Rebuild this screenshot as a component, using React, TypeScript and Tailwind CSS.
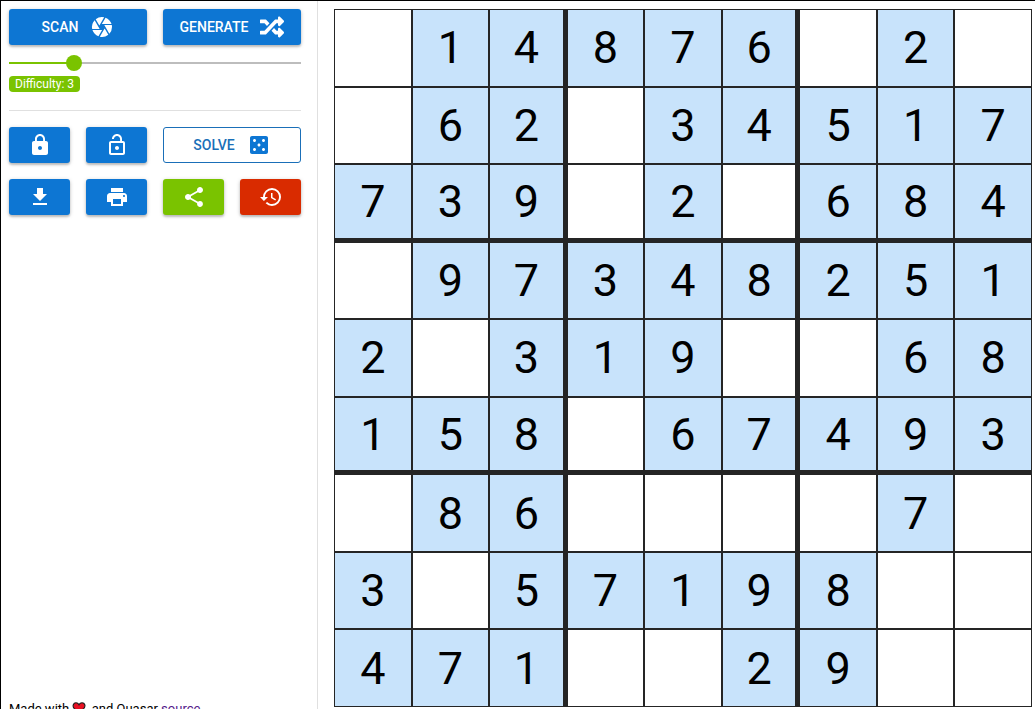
import { useState } from "react";
import type { ButtonHTMLAttributes } from "react";
import { FaRandom } from "react-icons/fa";
import {
  MdCamera,
  MdCasino,
  MdGetApp,
  MdHistory,
  MdLock,
  MdLockOpen,
  MdPrint,
  MdShare,
} from "react-icons/md";
import { twMerge } from "tailwind-merge";

const PUZZLE = [
  "014876020",
  "062034517",
  "739020684",
  "097348251",
  "203190068",
  "158067493",
  "086000070",
  "305719800",
  "471002900",
];

const MIN_DIFFICULTY = 1;
const MAX_DIFFICULTY = 10;

function ActionButton({ className, ...rest }: ButtonHTMLAttributes<HTMLButtonElement>) {
  return (
    <button
      type="button"
      className={twMerge(
        "flex h-9 cursor-pointer items-center justify-center gap-3 rounded-[3px] bg-[#0d76d3] text-sm font-medium text-white uppercase shadow-[0_1px_4px_rgba(0,0,0,0.2),0_2px_2px_rgba(0,0,0,0.16)]",
        className,
      )}
      {...rest}
    />
  );
}

function DifficultySlider() {
  const [level, setLevel] = useState(3);
  const filled = ((level - MIN_DIFFICULTY) / (MAX_DIFFICULTY - MIN_DIFFICULTY)) * 100;
  return (
    <div>
      <div className="mt-2 grid h-5 items-center">
        <div className="h-0.5 bg-[#bdbdbd] [grid-area:1/1]">
          <div className="h-full bg-[#7ac300]" style={{ width: `${filled}%` }} />
        </div>
        <input
          id="difficulty"
          type="range"
          min={MIN_DIFFICULTY}
          max={MAX_DIFFICULTY}
          value={level}
          onChange={(e) => setLevel(Number(e.target.value))}
          className="-mx-2 h-4 cursor-pointer appearance-none bg-transparent [grid-area:1/1] [&::-webkit-slider-thumb]:size-4 [&::-webkit-slider-thumb]:appearance-none [&::-webkit-slider-thumb]:rounded-full [&::-webkit-slider-thumb]:bg-[#7ac300]"
        />
      </div>
      <label
        htmlFor="difficulty"
        className="mt-[3px] block h-4 w-fit rounded-sm bg-[#7ac300] px-1.5 text-xs leading-4 text-white"
      >
        Difficulty: {level}
      </label>
    </div>
  );
}

function Heart() {
  return (
    <svg viewBox="0 0 24 22" className="mr-0.5 inline-block h-3 w-3.5 align-[-1px]" aria-hidden="true">
      <path
        d="M12 20.5 3 11.5C-.5 7.5 1.500 1.500 6.500 1.500 9 1.500 11 3 12 5c1-2 3-3.500 5.500-3.500 5.500 0 7 6 3.500 10z"
        fill="#e81123"
        stroke="#1a1a1a"
        strokeWidth="2"
      />
    </svg>
  );
}

function Board() {
  return (
    <div
      role="grid"
      aria-label="Sudoku"
      className="grid aspect-square grid-cols-9 grid-rows-9"
    >
      {PUZZLE.map((row, r) => (
        <div key={r} role="row" className="contents">
          {row.split("").map((digit, c) => (
            <div
              key={c}
              role="gridcell"
              className={twMerge(
                "flex items-center justify-center border border-[#252525] text-[45px] leading-none text-black",
                digit !== "0" && "bg-[#c8e3fb]",
                (c === 2 || c === 5) && "border-r-4",
                (r === 2 || r === 5) && "border-b-4",
              )}
            >
              {digit === "0" ? "" : digit}
            </div>
          ))}
        </div>
      ))}
    </div>
  );
}

export default function App() {
  return (
    <div className="h-screen overflow-hidden border-t border-l border-black bg-white font-['Roboto',sans-serif]">
      <div className="flex">
        <aside className="flex w-[317px] shrink-0 flex-col border-r border-[#e0e0e0] pt-2 pr-4 pl-2">
          <div className="grid grid-cols-2 gap-4">
            <ActionButton>
              Scan <MdCamera className="size-6" />
            </ActionButton>
            <ActionButton>
              Generate <FaRandom className="size-6" />
            </ActionButton>
          </div>
          <DifficultySlider />
          <hr className="mt-[18px] mb-4 border-[#e0e0e0]" />
          <div className="grid grid-cols-4 gap-4">
            <ActionButton aria-label="Lock">
              <MdLock className="size-6" />
            </ActionButton>
            <ActionButton aria-label="Unlock">
              <MdLockOpen className="size-6" />
            </ActionButton>
            <ActionButton className="col-span-2 border border-[#1a6fb8] bg-white text-[#1a6fb8] shadow-none">
              Solve <MdCasino className="size-6 text-[#0d76d3]" />
            </ActionButton>
            <ActionButton aria-label="Download">
              <MdGetApp className="size-6" />
            </ActionButton>
            <ActionButton aria-label="Print">
              <MdPrint className="size-6" />
            </ActionButton>
            <ActionButton aria-label="Share" className="bg-[#7ac300]">
              <MdShare className="size-6" />
            </ActionButton>
            <ActionButton aria-label="Reset" className="bg-[#d92b00]">
              <MdHistory className="size-6" />
            </ActionButton>
          </div>
          <footer className="mt-auto -mb-0.5 text-[13px] leading-4 text-black">
            Made with <Heart /> and Quasar{" "}
            <a href="#source" className="text-[#551a8b] underline">
              source
            </a>
          </footer>
        </aside>
        <main className="min-w-0 grow pt-2 pr-[3px] pb-2 pl-4">
          <Board />
        </main>
      </div>
    </div>
  );
}
